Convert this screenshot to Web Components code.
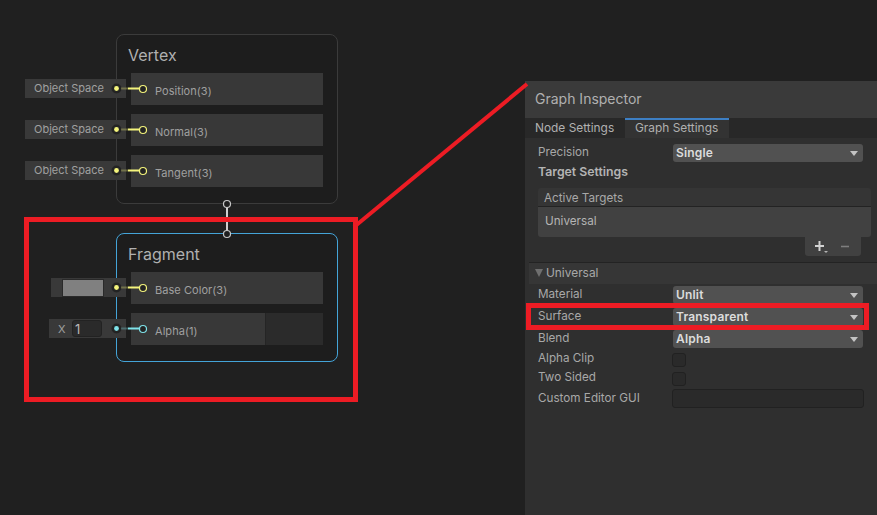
<!DOCTYPE html>
<html>
<head>
<meta charset="utf-8">
<title>Graph Inspector</title>
<style>
  html, body { margin: 0; height: 100%; background: #202020; overflow: hidden; }
  body { font-family: Inter, "Noto Sans", sans-serif; font-size: 11px; color: #a8a8a8; }
</style>
</head>
<body>
<shader-graph>
  <graph-node slot="nodes" title="Vertex" style="left:116px;top:34px">
    <port-row label="Position(3)"><port-chip>Object Space</port-chip></port-row>
    <port-row label="Normal(3)"><port-chip>Object Space</port-chip></port-row>
    <port-row label="Tangent(3)"><port-chip>Object Space</port-chip></port-row>
  </graph-node>
  <graph-node slot="nodes" title="Fragment" selected style="left:116px;top:233px">
    <port-row label="Base Color(3)"><port-chip kind="swatch"></port-chip></port-row>
    <port-row label="Alpha(1)" color="#7fe3ea" split><port-chip kind="number" color="#7fe3ea"></port-chip></port-row>
  </graph-node>
  <graph-inspector slot="inspector"></graph-inspector>
</shader-graph>

<script>
  // the whole view: free canvas with nodes, the inspector window and red notes on top
  class ShaderGraph extends HTMLElement {
    constructor() {
      super();
      const root = this.attachShadow({ mode: 'open' });
      root.innerHTML = `
        <style>
          :host { display: block; position: relative; width: 877px; height: 515px; overflow: hidden; }
          svg { position: absolute; left: 0; top: 0; pointer-events: none; }
        </style>
        <svg width="877" height="515" style="z-index:0">
          <line x1="227" y1="204" x2="227" y2="234" stroke="#cfcfcf" stroke-width="2"/>
        </svg>
        <slot name="nodes"></slot>
        <slot name="inspector"></slot>
        <svg width="877" height="515" style="z-index:5">
          <circle cx="227" cy="204" r="3.5" fill="#1e1e1e" stroke="#c8c8c8" stroke-width="1.2"/>
          <circle cx="227" cy="234" r="3.5" fill="#1e1e1e" stroke="#c8c8c8" stroke-width="1.2"/>
          <rect x="26.5" y="219.5" width="329" height="180" fill="none" stroke="#ed1c24" stroke-width="5"/>
          <line x1="354" y1="227" x2="527" y2="84" stroke="#ed1c24" stroke-width="4"/>
          <rect x="528.5" y="305.5" width="338" height="22" fill="none" stroke="#ed1c24" stroke-width="5"/>
        </svg>
      `;
    }
  }

  class GraphNode extends HTMLElement {
    constructor() {
      super();
      const root = this.attachShadow({ mode: 'open' });
      root.innerHTML = `
        <style>
          :host {
            display: flex; flex-direction: column; gap: 9px;
            position: absolute; z-index: 1; box-sizing: border-box; width: 222px;
            padding: 0 14px 16px; background: #1d1d1d;
            border: 1px solid #3b3b3b; border-radius: 8px;
          }
          :host([selected]) { border-color: #44a4d8; }
          .title {
            height: 38px; margin: 0 0 -9px -3px; padding-top: 10px; box-sizing: border-box;
            font-size: 16px; line-height: 20px; color: #b0b0b0;
          }
        </style>
        <div class="title"></div>
        <slot></slot>
      `;
      root.querySelector('.title').textContent = this.getAttribute('title');
    }
  }

  class PortRow extends HTMLElement {
    constructor() {
      super();
      const root = this.attachShadow({ mode: 'open' });
      const color = this.getAttribute('color') || '#f4f47c';
      root.innerHTML = `
        <style>
          :host { display: flex; position: relative; height: 32px; background: #383838; }
          .main { flex: 1; padding: 12px 0 0 24px; box-sizing: border-box; line-height: 13px; color: #a0a0a0; letter-spacing: .05px; }
          .rest { width: 58px; background: #2b2b2b; border-left: 1px solid #252525; box-sizing: border-box; display: none; }
          :host([split]) .rest { display: block; }
          svg { position: absolute; left: -15px; top: 6px; z-index: 2; overflow: visible; }
        </style>
        <slot></slot>
        <div class="main"></div>
        <div class="rest"></div>
        <svg width="34" height="20">
          <circle cx="0.5" cy="9.5" r="5" fill="#232323"/>
          <circle cx="0.5" cy="9.5" r="2.4" fill="${color}"/>
          <line x1="5" y1="9.5" x2="12" y2="9.5" stroke="${color}" stroke-opacity=".3" stroke-width="2"/>
          <line x1="12" y1="9.5" x2="24" y2="9.5" stroke="${color}" stroke-width="2"/>
          <circle cx="27" cy="10" r="3.5" fill="#232323" stroke="${color}" stroke-width="1.2"/>
        </svg>
      `;
      root.querySelector('.main').textContent = this.getAttribute('label');
    }
  }

  // the small input that hangs off the left of a port, outside the node
  class PortChip extends HTMLElement {
    constructor() {
      super();
      const root = this.attachShadow({ mode: 'open' });
      const kind = this.getAttribute('kind');
      let inner = '<span class="txt"><slot></slot></span>';
      if (kind === 'swatch') inner = '<span class="swatch"></span>';
      if (kind === 'number') inner = '<span class="x">X</span><span class="num">1</span>';
      root.innerHTML = `
        <style>
          :host {
            display: flex; align-items: center; position: absolute; z-index: 2;
            right: calc(100% + 5px); top: 6px; height: 19px; width: 101px; background: #393939;
            color: #a0a0a0; white-space: nowrap;
          }
          :host([kind="swatch"]) { width: 75px; }
          :host([kind="number"]) { width: 77px; }
          .txt { padding: 0 0 0 9px; line-height: 17px; margin-top: -1px; }
          .swatch { width: 40px; height: 16px; margin-left: 11px; background: #808080; border: 1px solid #2a2a2a; box-sizing: content-box; }
          .x { margin-left: 9px; width: 14px; font-size: 11px; }
          .num {
            width: 30px; height: 17px; padding-left: 2px; box-sizing: border-box;
            background: #2a2a2a; border: 1px solid #222; border-radius: 3px;
            font-size: 13px; line-height: 16px; color: #b8b8b8;
          }
        </style>
        ${inner}
      `;
    }
  }

  class InspectorDropdown extends HTMLElement {
    constructor() {
      super();
      const root = this.attachShadow({ mode: 'open' });
      root.innerHTML = `
        <style>
          :host {
            display: flex; align-items: center; justify-content: space-between;
            width: 190px; height: 18px; box-sizing: border-box; padding: 0 5px 2px 3px;
            background: #515151; border-radius: 3px;
            font-weight: 600; color: #dcdcdc; font-size: 12px; letter-spacing: .18px;
          }
          i { width: 0; height: 0; margin-top: 2px; border: 4px solid transparent; border-top: 5px solid #c4c4c4; border-bottom: 0; }
        </style>
        <slot></slot><i></i>
      `;
    }
  }

  class InspectorRow extends HTMLElement {
    constructor() {
      super();
      const root = this.attachShadow({ mode: 'open' });
      root.innerHTML = `
        <style>
          :host { display: flex; align-items: center; height: 18px; padding-left: 9px; color: #a8a8a8; font-size: 11.7px; }
          :host([short]) { height: 15px; }
          :host([tall]) { height: 19px; margin-top: -1px; }
          .label { width: 135px; flex: none; margin-top: -2px; }
          :host([short]) .label { margin-top: -4px; }
        </style>
        <div class="label"></div>
        <slot></slot>
      `;
      root.querySelector('.label').textContent = this.getAttribute('label');
    }
  }

  class GraphInspector extends HTMLElement {
    constructor() {
      super();
      const root = this.attachShadow({ mode: 'open' });
      root.innerHTML = `
        <style>
          :host {
            display: flex; flex-direction: column; position: absolute; z-index: 3;
            left: 525px; top: 81px; width: 352px; height: 434px;
            background: #2f2f2f; font-size: 11.7px; color: #a8a8a8;
          }
          .head { height: 37px; flex: none; padding: 9px 0 0 10px; box-sizing: border-box; background: #3a3a3a; font-size: 14px; line-height: 17px; color: #b0b0b0; }
          .tabs { display: flex; height: 20px; flex: none; background: #282828; }
          .tab { padding: 2px 10px 0; box-sizing: border-box; line-height: 15px; color: #b0b0b0; font-size: 11.9px; }
          .tab.first { width: 100px; }
          .tab.on { width: 104px; background: #333; border-top: 1px solid #3d7fc4; box-shadow: inset 0 1px #3d7fc4; padding-top: 1px; }
          .body { display: flex; flex-direction: column; padding: 6px 0 0 4px; }
          .bold { padding: 1px 0 0 9px; height: 20px; box-sizing: border-box; margin-top: 1px; font-size: 12.3px; font-weight: 600; line-height: 16px; color: #b4b4b4; }
          .targets { margin: 5px 6px 0 9px; border-radius: 3px; overflow: hidden; }
          .targets .top { height: 18px; padding-left: 6px; background: #353535; border-bottom: 1px solid #232323; box-sizing: content-box; line-height: 21px; }
          .targets .list { height: 30px; padding: 7px 0 0 7px; box-sizing: border-box; background: #414141; color: #b4b4b4; line-height: 15px; }
          .foot {
            display: flex; align-items: center; gap: 12px; align-self: flex-end; box-sizing: border-box;
            width: 56px; height: 19px; margin-right: 16px; padding-left: 9px;
            background: #414141; border-radius: 0 0 3px 3px;
          }
          .foot svg { display: block; }
          .fold {
            display: flex; align-items: center; gap: 3px; height: 22px; margin-top: 6px; padding: 0 0 2px 6px; box-sizing: border-box;
            background: #363636; border-top: 1px solid #232323; color: #a8a8a8; font-size: 11.9px;
          }
          .fold i { width: 0; height: 0; border: 4.5px solid transparent; border-top: 8px solid #6f6f6f; border-bottom: 0; }
          .rows { display: flex; flex-direction: column; gap: 4px; margin-top: 2px; }
          .check { width: 14px; height: 14px; margin-left: -1px; box-sizing: border-box; background: #2a2a2a; border: 1px solid #212121; border-radius: 3px; }
          .field { width: 192px; height: 19px; margin-left: -1px; box-sizing: border-box; background: #2a2a2a; border: 1px solid #212121; border-radius: 3px; }
        </style>
        <div class="head">Graph Inspector</div>
        <div class="tabs">
          <div class="tab first">Node Settings</div>
          <div class="tab on">Graph Settings</div>
        </div>
        <div class="body">
          <inspector-row label="Precision"><inspector-dropdown>Single</inspector-dropdown></inspector-row>
          <div class="bold">Target Settings</div>
          <div class="targets">
            <div class="top">Active Targets</div>
            <div class="list">Universal</div>
          </div>
          <div class="foot">
            <svg width="14" height="14" viewBox="0 0 14 14"><path d="M5.5 1v10M1 6h9" stroke="#d2d2d2" stroke-width="2" fill="none"/><path d="M10 11h4l-2 2z" fill="#b4b4b4"/></svg>
            <svg width="10" height="14" viewBox="0 0 10 14"><path d="M1 6.5h8" stroke="#7e7e7e" stroke-width="1.6" fill="none"/></svg>
          </div>
          <div class="fold"><i></i>Universal</div>
          <div class="rows">
            <inspector-row label="Material"><inspector-dropdown>Unlit</inspector-dropdown></inspector-row>
            <inspector-row label="Surface"><inspector-dropdown>Transparent</inspector-dropdown></inspector-row>
            <inspector-row label="Blend"><inspector-dropdown>Alpha</inspector-dropdown></inspector-row>
            <inspector-row short label="Alpha Clip"><span class="check"></span></inspector-row>
            <inspector-row short label="Two Sided"><span class="check"></span></inspector-row>
            <inspector-row tall label="Custom Editor GUI"><span class="field"></span></inspector-row>
          </div>
        </div>
      `;
    }
  }

  customElements.define('shader-graph', ShaderGraph);
  customElements.define('graph-node', GraphNode);
  customElements.define('port-row', PortRow);
  customElements.define('port-chip', PortChip);
  customElements.define('inspector-dropdown', InspectorDropdown);
  customElements.define('inspector-row', InspectorRow);
  customElements.define('graph-inspector', GraphInspector);
</script>
</body>
</html>
